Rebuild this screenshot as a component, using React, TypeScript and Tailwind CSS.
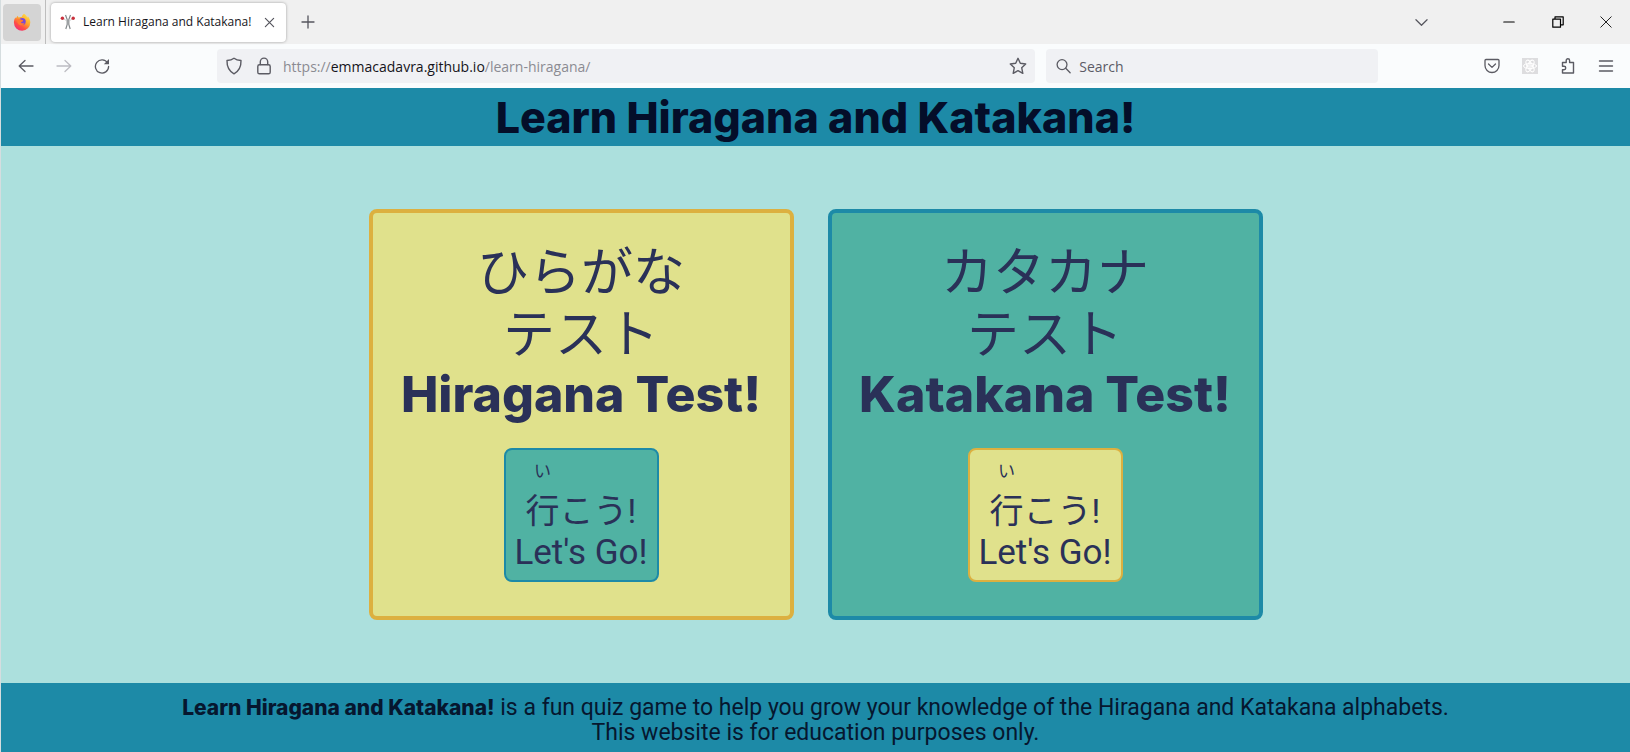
import React from "react";

type IconProps = { className?: string; children: React.ReactNode; box?: string; stroke?: number };

function Icon({ className = "size-4", children, box = "0 0 16 16", stroke = 1.3 }: IconProps) {
  return (
    <svg className={className} viewBox={box} fill="none" stroke="currentColor" strokeWidth={stroke} strokeLinecap="round" strokeLinejoin="round" aria-hidden="true">
      {children}
    </svg>
  );
}

function FirefoxLogo() {
  return (
    <svg className="size-[18px]" viewBox="0 0 18 18" aria-hidden="true">
      <defs>
        <linearGradient id="flame" x1="0.85" y1="0.05" x2="0.2" y2="1">
          <stop offset="0" stopColor="#ffe04a" />
          <stop offset="0.4" stopColor="#ffa42a" />
          <stop offset="0.7" stopColor="#ff4f45" />
          <stop offset="1" stopColor="#f0287c" />
        </linearGradient>
      </defs>
      <path d="M11 .8c2 1.2 3 2.700 3.200 4 .500-.300.600-1 .500-1.500 1.700 1.700 2.600 3.900 2.600 6.200A8.200 8.200 0 0 1 .9 9.600c0-2 .500-3.900 1.600-5.400.100.500.200.900.500 1.200.500-1.200 1.100-2 2-2.600 0 .700.100 1.300.500 1.800 1-.500 2-.700 3.200-.5C9 3 9.800 1.700 11 .8z" fill="url(#flame)" />
      <circle cx="9.200" cy="8.600" r="3.500" fill="#7a48d8" />
      <path d="M4.500 6.200c1.500-.6 3.100-.2 4.300.9 1.200-.1 1.500.4 1.300.8-.600.700-1.500.700-2.100 1.300.300 1.300 2 1.500 3.500.600-.4 2-2.300 3-4.300 2.400C5 11.500 3.800 9 4.500 6.200z" fill="#ff7a33" />
    </svg>
  );
}

function SwordsIcon() {
  return (
    <svg className="size-4" viewBox="0 0 16 16" fill="none" aria-hidden="true">
      <path d="M5.500 1 7.200 5.500v5L5.800 15M10.500 1 8.800 5.500v5l1.400 4.500" stroke="#84898c" strokeWidth="1.200" />
      <path d="M3 4.500 7 7M13 4.500 9 7" stroke="#c3c6c8" strokeWidth="0.800" />
      <circle cx="2.400" cy="4.200" r="1.700" fill="#c9303c" />
      <circle cx="13.200" cy="4.200" r="1.700" fill="#c9303c" />
    </svg>
  );
}

function TabStrip() {
  return (
    <div className="flex h-11 items-center bg-[#f0f0f0] text-[#55555d]">
      <button aria-label="Firefox View" className="ml-[2px] flex h-[37px] w-[38px] items-center justify-center rounded bg-[#d4d4d4]">
        <FirefoxLogo />
      </button>
      <span className="ml-1 h-full w-px bg-[#bdbdbd]" />
      <div className="ml-[5px] flex h-[39px] w-[235px] items-center rounded bg-white pl-[9px] pr-[7px] shadow-[0_0_3px_rgba(0,0,0,0.35)]">
        <SwordsIcon />
        <span className="ml-[7px] flex-1 whitespace-nowrap text-[12px] text-[#15141a]">Learn Hiragana and Katakana!</span>
        <button aria-label="Close tab" className="flex size-5 items-center justify-center">
          <Icon className="size-[11px]" box="0 0 12 12"><path d="m1.500 1.500 9 9m0-9-9 9" /></Icon>
        </button>
      </div>
      <button aria-label="New tab" className="ml-2 flex size-7 items-center justify-center">
        <Icon className="size-[14px]" box="0 0 14 14"><path d="M7 1v12M1 7h12" /></Icon>
      </button>
      <div className="ml-auto flex items-center">
        <button aria-label="List all tabs" className="mr-[45px] flex h-8 w-9 items-center justify-center">
          <Icon className="size-[13px]" box="0 0 14 14"><path d="m1 4 6 6 6-6" /></Icon>
        </button>
        <button aria-label="Minimize" className="flex h-8 w-[49px] items-center justify-center text-black">
          <Icon className="size-3" box="0 0 12 12" stroke={1.2}><path d="M.8 6h10.400" /></Icon>
        </button>
        <button aria-label="Restore" className="flex h-8 w-[49px] items-center justify-center text-black">
          <Icon className="size-3" box="0 0 12 12" stroke={1.2}><path d="M.8 3.200h7.700v8H.8zM3 3V.8h8.200v8H8.700" /></Icon>
        </button>
        <button aria-label="Close window" className="flex h-8 w-12 items-center justify-center text-[#222]">
          <Icon className="size-3" box="0 0 12 12" stroke={1}><path d="m.8.8 10.400 10.400m0-10.400L.8 11.200" /></Icon>
        </button>
      </div>
    </div>
  );
}

function Toolbar() {
  return (
    <div className="flex h-11 items-center bg-[#fafcfd] pr-4 text-[#5b5b63]">
      <div className="flex w-[216px] items-center gap-[22px] pl-[17px]">
        <button aria-label="Back"><Icon><path d="M15 8H1.200M7 2.500 1.200 8 7 13.500" /></Icon></button>
        <button aria-label="Forward" className="text-[#bcbcc2]"><Icon><path d="M1 8h13.800M9 2.500 14.800 8 9 13.500" /></Icon></button>
        <button aria-label="Reload">
          <Icon>
            <path d="M13.600 5A6.600 6.600 0 1 0 14.600 8.500" />
            <path d="M15 1v5.200H9.800z" fill="currentColor" stroke="none" />
          </Icon>
        </button>
      </div>
      <div className="flex h-[34px] flex-[821] items-center rounded bg-[#f0f1f4] pl-2 pr-2">
        <Icon className="size-[18px]" box="0 0 18 18" stroke={1.4}><path d="M9 1.200c2 1.500 4.300 2.100 7 2.300.200 6-1.500 10.300-7 13.300C3.500 13.800 1.800 9.500 2 3.500c2.700-.2 5-.8 7-2.300z" /></Icon>
        <Icon className="ml-3 size-[18px]" box="0 0 18 18" stroke={1.4}><rect x="2.800" y="7.800" width="12.400" height="9" rx="1.600" /><path d="M5.300 7.500V4.800a3.700 3.700 0 0 1 7.400 0v2.700" /></Icon>
        <a href="#top" className="ml-[10px] whitespace-nowrap text-[14px] text-[#8b8b92]">https://<span className="text-[#15141a]">emmacadavra.github.io</span>/learn-hiragana/</a>
        <button aria-label="Bookmark this page" className="ml-auto">
          <Icon className="size-[18px]" box="0 0 18 18" stroke={1.4}><path d="m9 1.300 2.300 5 5.400.7-4 3.700 1.100 5.600L9 13.600l-4.800 2.700 1.100-5.600-4-3.700 5.400-.7z" /></Icon>
        </button>
      </div>
      <label className="ml-[11px] flex h-[34px] flex-[329] items-center rounded bg-[#f0f1f4] pl-[10px]">
        <Icon stroke={1.4}><circle cx="6.500" cy="6.500" r="5.300" /><path d="m10.500 10.500 4.700 4.700" /></Icon>
        <input aria-label="Search" placeholder="Search" className="ml-2 w-full min-w-0 bg-transparent text-[14px] outline-none placeholder:text-[#5b5b66] placeholder:opacity-100" />
      </label>
      <div className="ml-[106px] flex items-center gap-[22px]">
        <button aria-label="Save to Pocket"><Icon><path d="M2 1.500h12c.6 0 1 .4 1 1V7.500a7 7 0 0 1-14 0v-5c0-.6.4-1 1-1z" /><path d="m4.500 6 3.500 3.400L11.500 6" /></Icon></button>
        <button aria-label="React developer tools" className="bg-[#dddddf] text-white">
          <Icon stroke={1}><circle cx="8" cy="8" r="1.300" /><ellipse cx="8" cy="8" rx="6.500" ry="2.600" /><ellipse cx="8" cy="8" rx="6.500" ry="2.600" transform="rotate(60 8 8)" /><ellipse cx="8" cy="8" rx="6.500" ry="2.600" transform="rotate(120 8 8)" /></Icon>
        </button>
        <button aria-label="Extensions"><Icon stroke={1.4}><path d="M2.500 4.500h3.700V2.500a1.700 1.700 0 0 1 3.400 0v2h3.900V15H2.500v-3.200H4a1.600 1.600 0 0 0 0-3.500H2.500z" /></Icon></button>
        <button aria-label="Open application menu"><Icon stroke={1.400}><path d="M1.500 3h13M1.500 8h13M1.500 13h13" /></Icon></button>
      </div>
    </div>
  );
}

type TestCardProps = { script: string; title: string; card: string; button: string };

function TestCard({ script, title, card, button }: TestCardProps) {
  return (
    <section className={`flex flex-col items-center rounded-lg border-4 pb-[34px] pt-[30px] text-[#2a3158] ${card}`}>
      <h2 className="text-center">
        <span className="block text-[52px] font-normal leading-[62px]">{script}</span>
        <span className="block text-[52px] font-normal leading-[62px]">テスト</span>
        <span className="block whitespace-nowrap font-[Inter] text-[50px] font-extrabold leading-[54px]">{title}</span>
      </h2>
      <button className={`mt-[27px] flex h-[134px] w-[155px] flex-col items-center justify-end rounded-lg border-2 pb-[7px] leading-[41px] ${button}`}>
        <span className="block whitespace-nowrap text-[34px]"><ruby>行<rt className="text-[17px]"><span className="inline-block pb-[10px] leading-[24px]">い</span></rt></ruby>こう!</span>
        <span className="block whitespace-nowrap text-[35px]">Let's Go!</span>
      </button>
    </section>
  );
}

export default function App() {
  return (
    <div id="top" className="flex min-h-screen flex-col border-l border-[#d5dddf] bg-[#ace0dd]">
      <div className="font-['Open_Sans',sans-serif]">
        <TabStrip />
        <Toolbar />
      </div>
      <header className="bg-[#1d8aa7] text-center text-[#040e29]">
        <h1 className="font-[Inter] text-[43px] font-extrabold leading-[58px]">Learn Hiragana and Katakana!</h1>
      </header>
      <main className="flex flex-1 items-center justify-center gap-[34px] font-[Roboto,'Noto_Sans_CJK_JP',sans-serif]">
        <TestCard script="ひらがな" title="Hiragana Test!" card="w-[425px] border-[#dcb040] bg-[#e0e18c]" button="border-[#1d8aa7] bg-[#50b2a3]" />
        <TestCard script="カタカナ" title="Katakana Test!" card="w-[435px] border-[#1d8aa7] bg-[#50b2a3]" button="border-[#dcb040] bg-[#e0e18c]" />
      </main>
      <footer className="bg-[#1d8aa7] pb-[7px] pt-3 text-center font-[Roboto] text-[23px] leading-[25px] text-[#06172f]">
        <p><strong className="font-[Inter] text-[21px] font-extrabold leading-none">Learn Hiragana and Katakana!</strong> is a fun quiz game to help you grow your knowledge of the Hiragana and Katakana alphabets.</p>
        <p>This website is for education purposes only.</p>
      </footer>
    </div>
  );
}
